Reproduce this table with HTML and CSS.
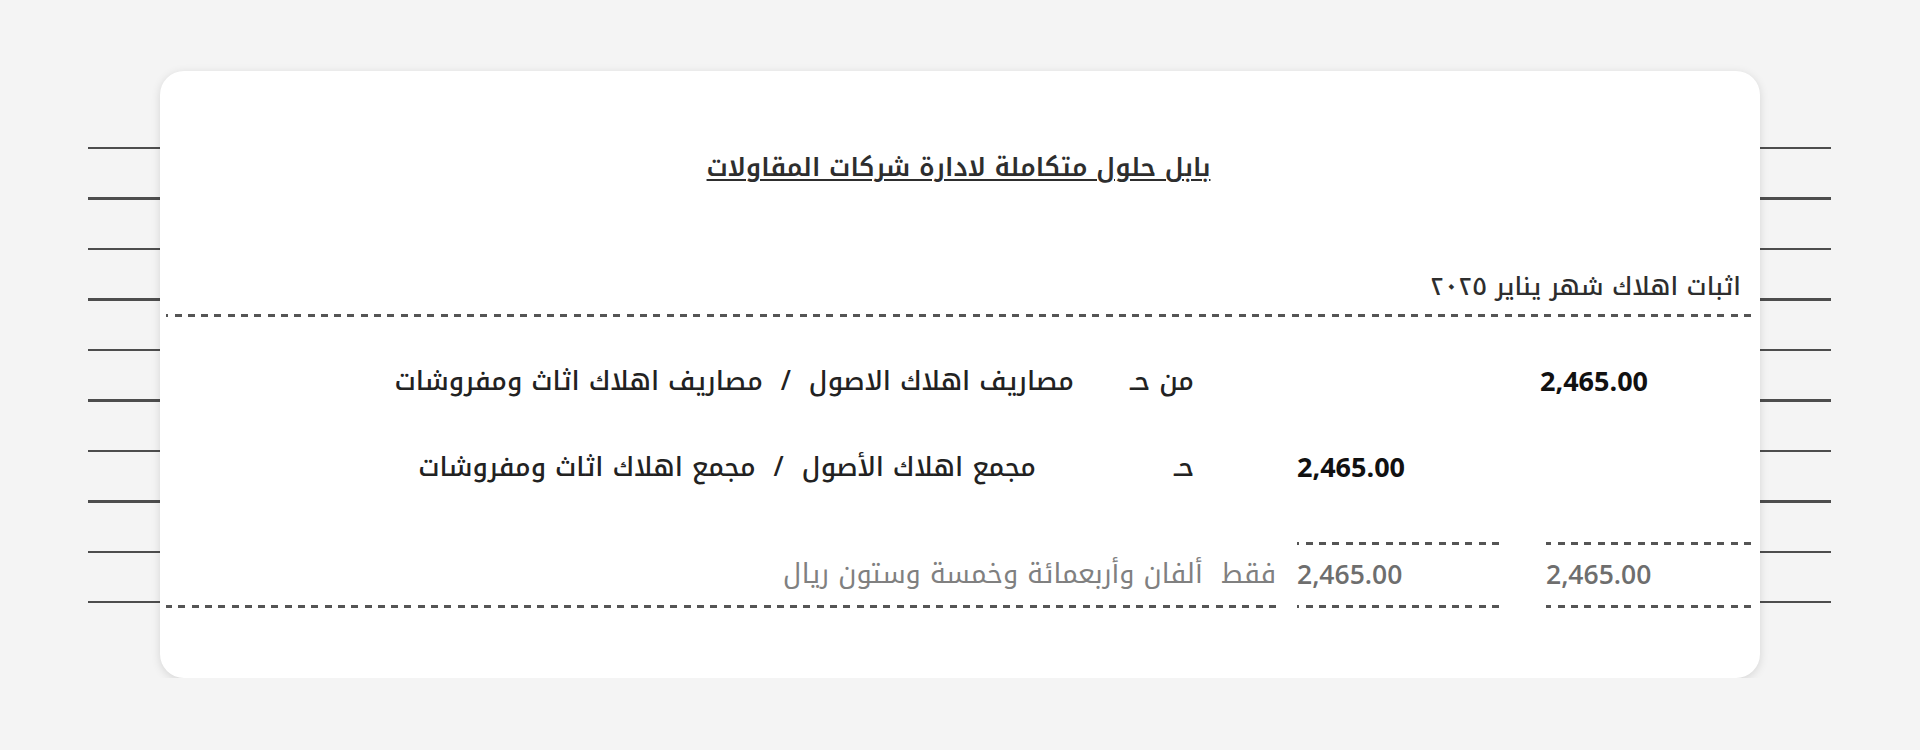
FILE: index.html
```html
<!DOCTYPE html>
<html lang="ar">
<head>
<meta charset="utf-8">
<title>اثبات اهلاك</title>
<link rel="stylesheet" href="styles.css">
</head>
<body>
<div class="page">
  <div class="card" dir="rtl">
    <div class="title"><span>بابل حلول متكاملة لادارة شركات المقاولات</span></div>
    <div class="subtitle"><span>اثبات اهلاك شهر يناير ٢٠٢٥</span></div>
    <div class="dash dash-full"></div>

    <div class="entries">
      <div class="entry">
        <div class="amt amt-a amt-bold amt-shift">2,465.00</div>
        <div class="desc-cell">
          <span class="label">من حـ</span>
          <span class="desc">مصاريف اهلاك الاصول &nbsp;/&nbsp; مصاريف اهلاك اثاث ومفروشات</span>
        </div>
      </div>
      <div class="entry">
        <div class="amt amt-b amt-bold">2,465.00</div>
        <div class="desc-cell">
          <span class="label">حـ</span>
          <span class="desc desc-indent">مجمع اهلاك الأصول &nbsp;/&nbsp; مجمع اهلاك اثاث ومفروشات</span>
        </div>
      </div>
    </div>

    <div class="totals">
      <div class="dash tot-a tot-top"></div>
      <div class="dash tot-b tot-top"></div>
      <div class="amt amt-a tot-num">2,465.00</div>
      <div class="amt amt-b tot-num">2,465.00</div>
      <div class="words tot-num">فقط &nbsp;ألفان وأربعمائة وخمسة وستون ريال</div>
      <div class="dash tot-a tot-bottom"></div>
      <div class="dash tot-b tot-bottom"></div>
      <div class="dash tot-c tot-bottom"></div>
    </div>
  </div>
</div>
</body>
</html>
```

FILE: styles.css
```css
html, body {
  margin: 0;
  padding: 0;
}

body {
  background: #f4f4f4;
  font-family: "Noto Kufi Arabic", "Noto Sans Arabic", "DejaVu Sans", sans-serif;
  color: #222;
}

.page {
  margin: 71px 0 0 88px;
  width: 1743px;
  background-image: repeating-linear-gradient(to bottom, #4d4d4d 0 2px, transparent 2px 50.5px);
  background-size: 100% 456px;
  background-position: 0 76px;
  background-repeat: no-repeat;
}

.card {
  margin: 0 71px 0 72px;
  height: 607px;
  box-sizing: border-box;
  background: #fff;
  border-radius: 24px;
  box-shadow: 0 2px 10px rgba(0, 0, 0, 0.13);
  padding: 0 9px 0 6px;
}

.title {
  padding-top: 77px;
  height: 40px;
  line-height: 40px;
  text-align: center;
  font-size: 25.5px;
  font-weight: 600;
  color: #2e2e2e;
}

.title span {
  text-decoration: underline;
  text-underline-offset: 3px;
  text-decoration-thickness: 2px;
}

.subtitle {
  margin-top: 82px;
  height: 34px;
  line-height: 34px;
  padding-right: 10px;
  font-size: 24.8px;
  font-weight: 500;
  color: #2e2e2e;
}

.dash {
  height: 3px;
  background-image: repeating-linear-gradient(to left, #555 0 7px, transparent 7px 13.3px);
}

.dash-full {
  margin-top: 10px;
}

.entries {
  margin-top: 44px;
  display: flex;
  flex-direction: column;
  gap: 46px;
}

.entry,
.totals {
  display: grid;
  grid-template-columns: 205px 47px 202px 21px 1fr;
}

.entry {
  height: 40px;
  line-height: 40px;
}

.amt {
  direction: ltr;
  text-align: left;
  font-family: "Open Sans", "Liberation Sans", sans-serif;
  font-size: 27px;
}

.amt-bold {
  font-weight: 700;
  color: #111;
}

.amt-shift {
  margin-left: -6px;
}

.amt-a {
  grid-column: 1;
}

.amt-b {
  grid-column: 3;
}

.desc-cell {
  grid-column: 5;
  display: flex;
  font-size: 26.4px;
  font-weight: 500;
  color: #222;
}

.label {
  width: 120px;
  margin-right: 82px;
  flex: none;
}

.desc-indent {
  padding-right: 38px;
}

.totals {
  margin-top: 55px;
  grid-template-rows: 3px 40px 3px;
  row-gap: 9px;
}

.tot-top {
  grid-row: 1;
}

.tot-num {
  grid-row: 2;
  line-height: 40px;
  color: #808080;
}

.tot-bottom {
  grid-row: 3;
  margin-top: 2px;
}

.tot-a {
  grid-column: 1;
}

.tot-b {
  grid-column: 3;
}

.tot-c {
  grid-column: 5;
}

.words {
  grid-column: 5;
  font-size: 27px;
}

.amt.tot-num {
  font-size: 26.5px;
  font-weight: 600;
  color: #6e6e6e;
}
```
